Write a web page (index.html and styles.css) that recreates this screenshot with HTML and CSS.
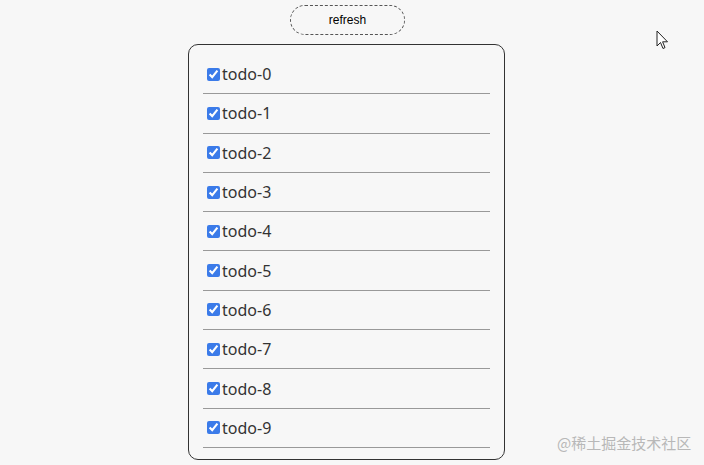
FILE: index.html
```html
<!DOCTYPE html>
<html>
<head>
<meta charset="utf-8">
<link rel="stylesheet" href="styles.css">
</head>
<body>
<div class="page">
  <button class="refresh">refresh</button>
  <ul class="list">
    <li class="item"><input type="checkbox" checked><span>todo-0</span></li>
    <li class="item"><input type="checkbox" checked><span>todo-1</span></li>
    <li class="item"><input type="checkbox" checked><span>todo-2</span></li>
    <li class="item"><input type="checkbox" checked><span>todo-3</span></li>
    <li class="item"><input type="checkbox" checked><span>todo-4</span></li>
    <li class="item"><input type="checkbox" checked><span>todo-5</span></li>
    <li class="item"><input type="checkbox" checked><span>todo-6</span></li>
    <li class="item"><input type="checkbox" checked><span>todo-7</span></li>
    <li class="item"><input type="checkbox" checked><span>todo-8</span></li>
    <li class="item"><input type="checkbox" checked><span>todo-9</span></li>
  </ul>
</div>
<div class="watermark">@稀土掘金技术社区</div>
<svg class="cursor" width="14" height="22" viewBox="0 0 14 22"><path d="M1 1 L1 16 L4.5 12.5 L7 18.5 L9 17.6 L6.6 11.8 L11.5 11.8 Z" fill="#fff" stroke="#222" stroke-width="1"/></svg>
</body>
</html>
```
FILE: styles.css
```css
html, body {
  margin: 0;
  padding: 0;
  background: #f7f7f7;
  width: 704px;
  height: 465px;
  overflow: hidden;
}
.page {
  display: flex;
  flex-direction: column;
  align-items: center;
  padding-top: 5px;
}
.refresh {
  width: 115px;
  height: 30px;
  margin-left: -9px;
  border: 1px dashed #555;
  border-radius: 15px;
  background: transparent;
  font-family: "Liberation Sans", Arial, sans-serif;
  font-size: 12px;
  color: #000;
  padding: 0;
}
.list {
  list-style: none;
  margin: 9px 0 0 -11px;
  width: 287px;
  padding: 10px 14px 11px 14px;
  border: 1px solid #333;
  border-radius: 10px;
}
.item {
  height: 38.3px;
  border-bottom: 1px solid #999;
  display: flex;
  align-items: center;
  font-family: "Noto Sans", "Open Sans", sans-serif;
  font-size: 16px;
  color: #333;
}
.item input {
  margin: 0 2px 0 4px;
  width: 13px;
  height: 13px;
  accent-color: #3b7be9;
}
.watermark {
  position: absolute;
  left: 557px;
  top: 432px;
  font-family: "Noto Sans CJK SC", sans-serif;
  font-size: 15px;
  color: #b8b8b8;
}
.cursor {
  position: absolute;
  left: 656px;
  top: 30px;
}
```
